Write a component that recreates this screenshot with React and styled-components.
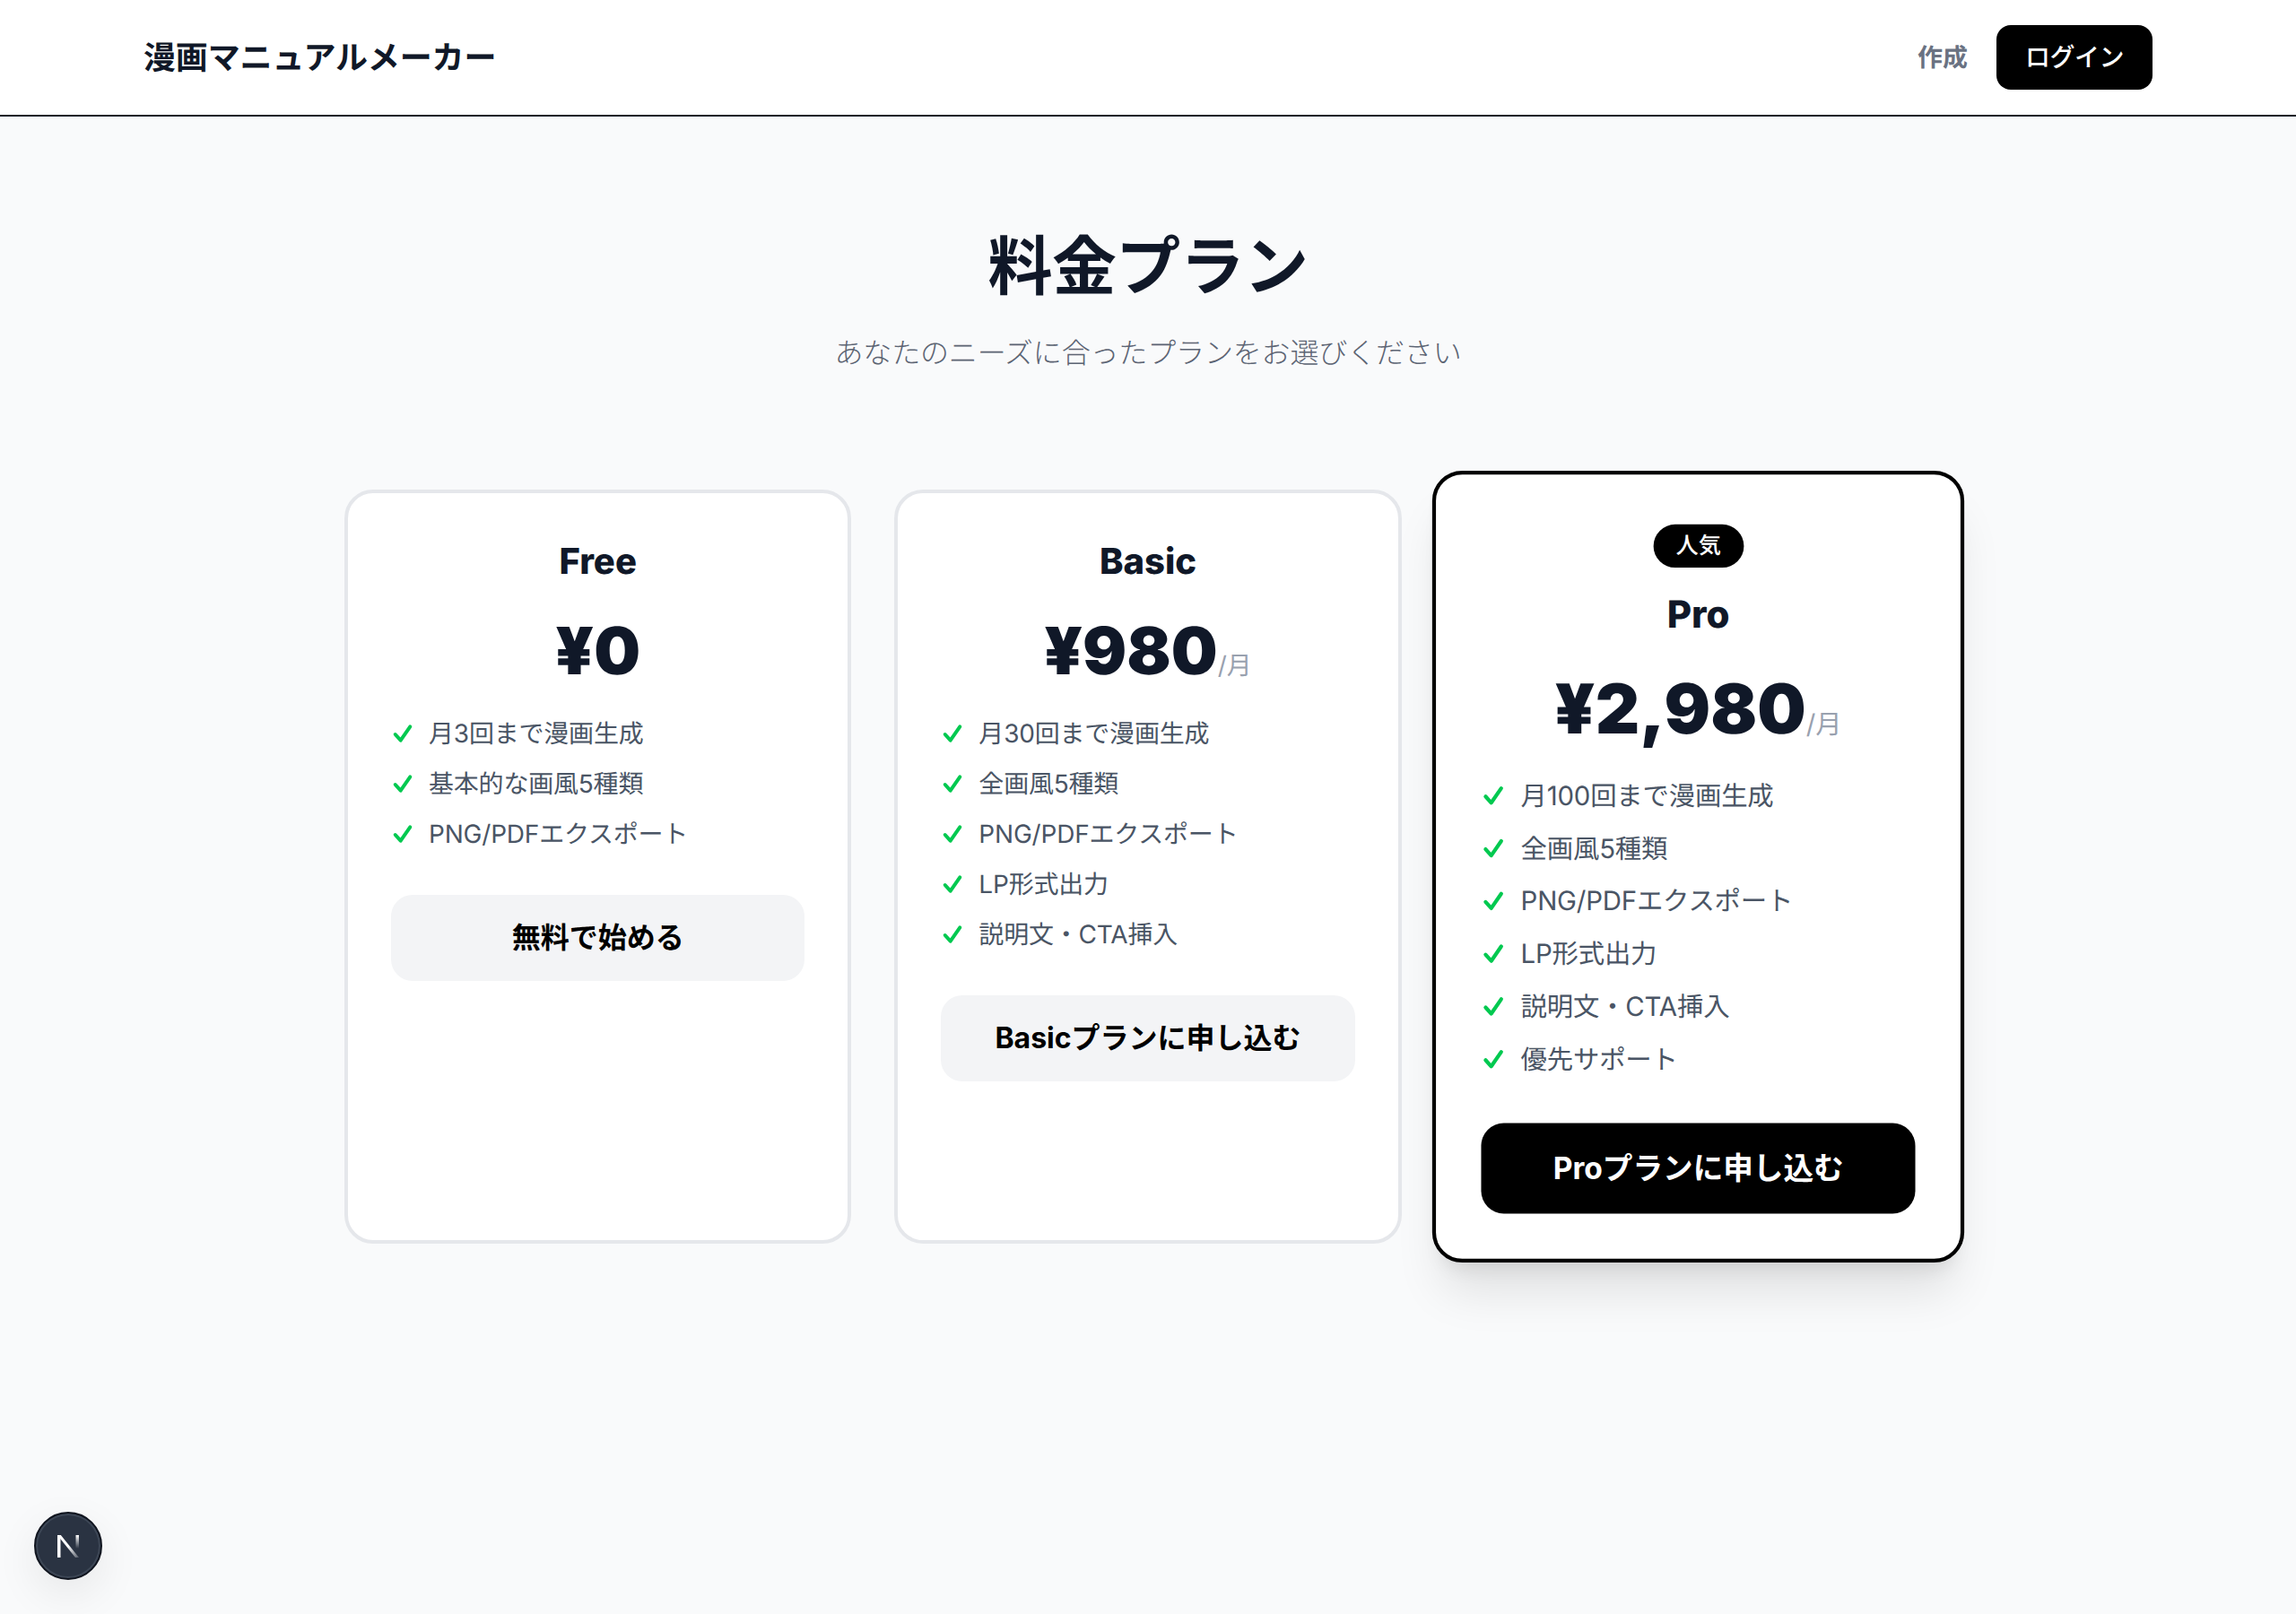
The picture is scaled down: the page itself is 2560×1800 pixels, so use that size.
import React from 'react';
import styled, { createGlobalStyle } from 'styled-components';

const fontStack = `Inter, "Noto Sans CJK JP", sans-serif`;

const GlobalStyle = createGlobalStyle`
  * { box-sizing: border-box; }
  body {
    margin: 0;
    background: #f9fafb;
    font-family: ${fontStack};
    color: #101828;
    text-rendering: geometricPrecision;
  }
`;

const Page = styled.div`
  min-height: 100vh;
  background: #f9fafb;
`;

const Header = styled.header`
  height: 130px;
  background: #fff;
  border-bottom: 2px solid #101828;
  padding: 0 160px;
  display: flex;
  align-items: center;
  justify-content: space-between;
`;

const Logo = styled.div`
  font-size: 36px;
  line-height: 56px;
  font-weight: 700;
  letter-spacing: -0.15px;
  color: #101828;
`;

const Nav = styled.nav`
  display: flex;
  align-items: center;
  gap: 32px;
`;

const NavLink = styled.a`
  font-size: 28px;
  line-height: 40px;
  font-weight: 700;
  color: #6a7282;
`;

const LoginButton = styled.button`
  width: 174px;
  height: 72px;
  border: 0;
  border-radius: 16px;
  background: #000;
  color: #fff;
  font: 500 28px/40px ${fontStack};
  letter-spacing: -0.5px;
`;

const Main = styled.main`
  padding: 128px 0;
`;

const Intro = styled.div`
  text-align: center;
  margin-bottom: 128px;
`;

const Title = styled.h1`
  margin: 0;
  font-size: 72px;
  line-height: 80px;
  font-weight: 700;
  letter-spacing: -0.6px;
  color: #101828;
`;

const Subtitle = styled.p`
  margin: 32px 0 0;
  font-size: 32px;
  line-height: 48px;
  font-weight: 300;
  letter-spacing: -0.15px;
  color: #5c6473;
`;

const PlanGrid = styled.div`
  width: 1792px;
  margin: 0 auto;
  display: grid;
  grid-template-columns: repeat(3, 1fr);
  gap: 48px;
`;

const Card = styled.section`
  background: #fff;
  border: 4px solid ${props => (props.$featured ? '#000' : '#e5e7eb')};
  border-radius: 32px;
  padding: 48px;
  ${props => props.$featured && `
    transform: scale(1.05);
    box-shadow: 0 40px 50px -10px rgba(0, 0, 0, 0.1), 0 16px 20px -12px rgba(0, 0, 0, 0.1);
  `}
`;

const BadgeRow = styled.div`
  height: 56px;
  margin-bottom: 17px;
  display: flex;
  align-items: center;
  justify-content: center;
`;

const Badge = styled.span`
  height: 46px;
  padding: 0 24px;
  border-radius: 999px;
  background: #000;
  color: #fff;
  font-size: 24px;
  line-height: 46px;
  font-weight: 500;
`;

const PlanName = styled.h2`
  margin: 0 0 32px;
  text-align: center;
  font-size: 40px;
  line-height: 56px;
  font-weight: 800;
  color: #101828;
`;

const Price = styled.div`
  margin-bottom: 32px;
  text-align: center;
  font-size: 73px;
  line-height: 80px;
  font-weight: 900;
  color: #101828;
`;

const Period = styled.span`
  font-size: 28px;
  line-height: 28px;
  font-weight: 400;
  color: #99a1af;
`;

const Features = styled.ul`
  list-style: none;
  margin: 0 0 48px;
  padding: 0;
  display: flex;
  flex-direction: column;
  gap: 16px;
`;

const Feature = styled.li`
  display: flex;
  align-items: center;
  gap: 10px;
  font-size: 28px;
  line-height: 40px;
  letter-spacing: -0.2px;
  color: #4a5565;
`;

const CheckIcon = styled.svg`
  width: 32px;
  height: 32px;
  flex: none;
  fill: none;
  stroke: #00c950;
  stroke-width: 4;
  stroke-linecap: round;
  stroke-linejoin: round;
`;

const PlanButton = styled.button`
  display: block;
  width: 100%;
  height: 96px;
  border: 0;
  border-radius: 24px;
  background: ${props => (props.$featured ? '#000' : '#f3f4f6')};
  color: ${props => (props.$featured ? '#fff' : '#000')};
  font: 700 32px/48px ${fontStack};
`;

const DevBadge = styled.div`
  position: fixed;
  left: 38px;
  bottom: 38px;
  width: 76px;
  height: 76px;
  border-radius: 50%;
  background: #2a3342;
  border: 2px solid #10151f;
  box-shadow: 0 16px 48px rgba(0, 0, 0, 0.08), inset 0 0 0 2px #3d4756;
  display: flex;
  align-items: center;
  justify-content: center;
`;

const plans = [
  {
    name: 'Free',
    price: '¥0',
    features: ['月3回まで漫画生成', '基本的な画風5種類', 'PNG/PDFエクスポート'],
    cta: '無料で始める',
  },
  {
    name: 'Basic',
    price: '¥980',
    period: '/月',
    features: ['月30回まで漫画生成', '全画風5種類', 'PNG/PDFエクスポート', 'LP形式出力', '説明文・CTA挿入'],
    cta: 'Basicプランに申し込む',
  },
  {
    name: 'Pro',
    price: '¥2,980',
    period: '/月',
    featured: true,
    features: ['月100回まで漫画生成', '全画風5種類', 'PNG/PDFエクスポート', 'LP形式出力', '説明文・CTA挿入', '優先サポート'],
    cta: 'Proプランに申し込む',
  },
];

const Check = () => (
  <CheckIcon viewBox="0 0 32 32">
    <path d="M4.7 17 L10.7 23.7 L21.3 8.3" />
  </CheckIcon>
);

const NextMark = () => (
  <svg width="34" height="34" viewBox="0 0 34 34">
    <defs>
      <linearGradient id="nDiag" x1="0" y1="0" x2="1" y2="1">
        <stop offset="0.5" stopColor="#fff" />
        <stop offset="1" stopColor="#fff" stopOpacity="0.2" />
      </linearGradient>
      <linearGradient id="nBar" x1="0" y1="0" x2="0" y2="1">
        <stop offset="0" stopColor="#fff" />
        <stop offset="1" stopColor="#fff" stopOpacity="0" />
      </linearGradient>
    </defs>
    <path d="M5 5 H8.5 V30 H5 Z" fill="#fff" />
    <path d="M5 5 H8.8 L29 30 H25 Z" fill="url(#nDiag)" />
    <path d="M25.5 5 H29 V20 H25.5 Z" fill="url(#nBar)" />
  </svg>
);

export default function App() {
  return (
    <Page>
      <GlobalStyle />
      <Header>
        <Logo>漫画マニュアルメーカー</Logo>
        <Nav>
          <NavLink>作成</NavLink>
          <LoginButton>ログイン</LoginButton>
        </Nav>
      </Header>
      <Main>
        <Intro>
          <Title>料金プラン</Title>
          <Subtitle>あなたのニーズに合ったプランをお選びください</Subtitle>
        </Intro>
        <PlanGrid>
          {plans.map(plan => (
            <Card key={plan.name} $featured={plan.featured}>
              {plan.featured && (
                <BadgeRow>
                  <Badge>人気</Badge>
                </BadgeRow>
              )}
              <PlanName>{plan.name}</PlanName>
              <Price>
                {plan.price}
                {plan.period && <Period>{plan.period}</Period>}
              </Price>
              <Features>
                {plan.features.map(feature => (
                  <Feature key={feature}>
                    <Check />
                    {feature}
                  </Feature>
                ))}
              </Features>
              <PlanButton $featured={plan.featured}>{plan.cta}</PlanButton>
            </Card>
          ))}
        </PlanGrid>
      </Main>
      <DevBadge>
        <NextMark />
      </DevBadge>
    </Page>
  );
}
